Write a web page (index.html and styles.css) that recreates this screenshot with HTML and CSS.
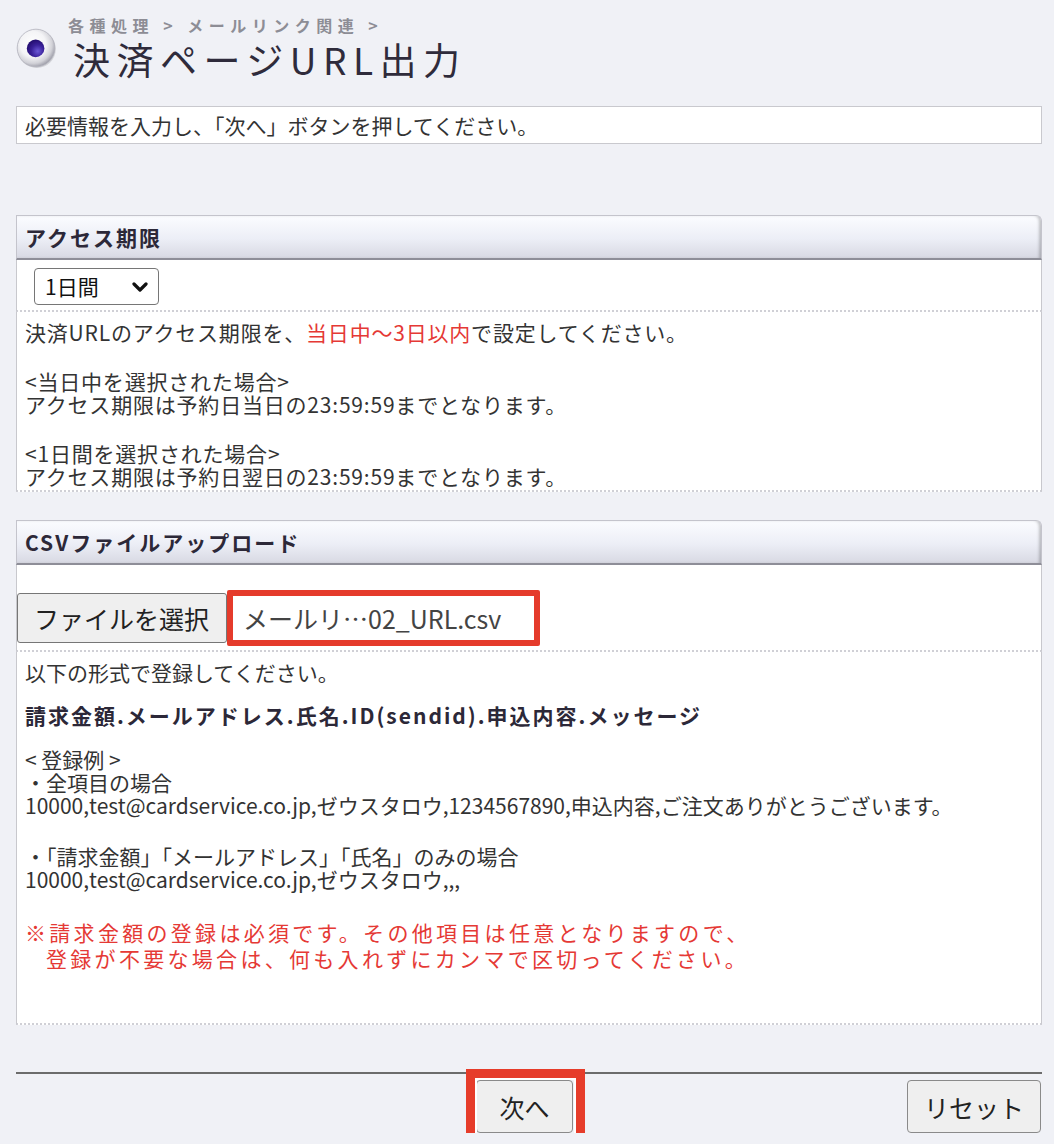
FILE: index.html
```html
<!DOCTYPE html>
<html lang="ja">
<head>
<meta charset="utf-8">
<title>決済ページURL出力</title>
<link rel="stylesheet" href="styles.css">
</head>
<body>
<div class="page">
  <header class="pagehead">
    <svg class="icon" width="40" height="40" viewBox="0 0 40 40" aria-hidden="true">
      <defs>
        <radialGradient id="ball" cx="42%" cy="40%" r="62%">
          <stop offset="0" stop-color="#ffffff"/>
          <stop offset="0.55" stop-color="#f4f4f6"/>
          <stop offset="0.82" stop-color="#d2d2d8"/>
          <stop offset="1" stop-color="#9d9da8"/>
        </radialGradient>
        <radialGradient id="dot" cx="62%" cy="66%" r="65%">
          <stop offset="0" stop-color="#6b58d6"/>
          <stop offset="0.55" stop-color="#3a2199"/>
          <stop offset="1" stop-color="#250f72"/>
        </radialGradient>
      </defs>
      <circle cx="20.8" cy="21" r="19" fill="#000" opacity="0.12"/>
      <circle cx="20" cy="20" r="18.8" fill="url(#ball)" stroke="#b3b3bc" stroke-width="0.8"/>
      <circle cx="19.6" cy="20.4" r="8.8" fill="url(#dot)"/>
    </svg>
    <div class="titles">
      <div class="crumb">各種処理 &gt; メールリンク関連 &gt;</div>
      <h1 class="title">決済ページURL出力</h1>
    </div>
  </header>

  <div class="notice">必要情報を入力し、「次へ」ボタンを押してください。</div>

  <section class="panel">
    <h2 class="panel-head">アクセス期限</h2>
    <div class="panel-row select-row">
      <div class="select">
        <span>1日間</span>
        <svg class="chev" width="16" height="10" viewBox="0 0 16 10" aria-hidden="true">
          <path d="M2 2 L8 8 L14 2" fill="none" stroke="#111" stroke-width="3.2" stroke-linecap="round" stroke-linejoin="round"/>
        </svg>
      </div>
    </div>
    <div class="panel-body access">
      <p>決済URLのアクセス期限を、<span class="red">当日中〜3日以内</span>で設定してください。</p>
      <p>&lt;当日中を選択された場合&gt;<br>アクセス期限は予約日当日の23:59:59までとなります。</p>
      <p>&lt;1日間を選択された場合&gt;<br>アクセス期限は予約日翌日の23:59:59までとなります。</p>
    </div>
  </section>

  <section class="panel">
    <h2 class="panel-head">CSVファイルアップロード</h2>
    <div class="panel-row file-row">
      <button class="filebtn" type="button">ファイルを選択</button>
      <span class="filename">メールリ…02_URL.csv</span>
    </div>
    <div class="panel-body csv">
      <p>以下の形式で登録してください。</p>
      <p class="fmt">請求金額.メールアドレス.氏名.ID(sendid).申込内容.メッセージ</p>
      <p class="ex1">&lt; 登録例 &gt;<br>・全項目の場合<br>10000,test@cardservice.co.jp,ゼウスタロウ,1234567890,申込内容,ご注文ありがとうございます。</p>
      <p class="ex2">・「請求金額」「メールアドレス」「氏名」のみの場合<br>10000,test@cardservice.co.jp,ゼウスタロウ,,,</p>
      <p class="warn">※請求金額の登録は必須です。その他項目は任意となりますので、<br><span class="indent">登録が不要な場合は、何も入れずにカンマで区切ってください。</span></p>
    </div>
  </section>

  <div class="footer">
    <span class="highlight"><button class="btn btn-next" type="button">次へ</button></span>
    <button class="btn btn-reset" type="button">リセット</button>
  </div>
</div>
</body>
</html>
```

FILE: styles.css
```css
html, body {
  margin: 0;
  padding: 0;
}

body {
  background: #f0f1f6;
  font-family: "Noto Sans CJK JP", "Noto Sans", sans-serif;
  font-size: 21px;
  line-height: 23px;
  color: #333;
}

.page {
  padding: 16px 12px 0 16px;
}

/* ---------- page heading ---------- */
.pagehead {
  display: flex;
  align-items: flex-start;
  gap: 12px;
}

.icon {
  display: block;
  flex: none;
  margin-top: 12px;
}

.crumb {
  font-size: 16px;
  font-weight: bold;
  line-height: 18px;
  letter-spacing: 5.5px;
  color: #8d8d95;
}

.title {
  margin: 5px 0 0 5px;
  font-size: 37px;
  font-weight: normal;
  line-height: 40px;
  letter-spacing: 6.5px;
  color: #2f2b3b;
}

/* ---------- notice ---------- */
.notice {
  margin-top: 27px;
  background: #fff;
  border: 1px solid #c9c9ce;
  padding: 7px 8px 6px;
}

/* ---------- panels ---------- */
.panel {
  margin-top: 71px;
}

.panel + .panel {
  margin-top: 28px;
}

.panel-head {
  margin: 0;
  padding: 10px 8px 9px;
  font-size: 21px;
  font-weight: bold;
  line-height: 23px;
  letter-spacing: 2px;
  color: #2c2838;
  background: linear-gradient(#fbfcff 0%, #eceef6 55%, #d8d9e3 100%);
  border: 1px solid #c4c4cc;
  border-bottom: 2px solid #8e8e98;
  border-top-right-radius: 6px;
  box-shadow: inset -3px 0 3px -1px rgba(0, 0, 0, 0.22);
}

.panel-row,
.panel-body {
  background: #fff;
  border-left: 1px solid #c8c8cd;
  border-right: 1px solid #c8c8cd;
  border-bottom: 2px dotted #d0d0d6;
}

.select-row {
  padding: 8px 0 5px 17px;
}

.select {
  box-sizing: border-box;
  width: 125px;
  height: 37px;
  display: flex;
  align-items: center;
  justify-content: space-between;
  padding: 0 10px;
  background: #fff;
  border: 1px solid #767676;
  border-radius: 4px;
  color: #111;
}

.chev {
  display: block;
}

.panel-body {
  padding: 9px 8px 2px;
}

.panel-body p {
  margin: 0;
}

.panel-body p + p {
  margin-top: 26px;
}

.access {
  letter-spacing: 0.8px;
}

.red {
  color: #e53935;
}

/* ---------- file upload ---------- */
.file-row {
  display: flex;
  align-items: center;
  padding: 25px 0 4px 0;
}

.filebtn {
  box-sizing: border-box;
  height: 50px;
  width: 210px;
  padding: 0 12px 0 16px;
  font-family: inherit;
  font-size: 25px;
  color: #222;
  text-align: left;
  background: #efefef;
  border: 1px solid #767676;
  border-radius: 3px;
}

.filename {
  box-sizing: border-box;
  width: 313px;
  height: 56px;
  display: flex;
  align-items: center;
  padding-left: 10px;
  font-size: 25px;
  color: #444;
  background: #fff;
  border: 6px solid #e53b2b;
  border-radius: 2px;
}

.csv {
  padding-bottom: 52px;
}

.panel-body.csv p.fmt {
  margin-top: 20px;
  font-weight: bold;
  letter-spacing: 2px;
  color: #2c2838;
}

.panel-body.csv p.ex1 {
  margin-top: 21px;
}

.panel-body.csv p.ex2 {
  margin-top: 28px;
}

.panel-body.csv p.warn {
  margin-top: 28px;
  line-height: 26px;
  letter-spacing: 3.3px;
  color: #e53935;
}

.indent {
  padding-left: 21px;
}

/* ---------- footer ---------- */
.footer {
  margin-top: 47px;
  border-top: 2px solid #6c6c6c;
  padding-top: 6px;
  display: grid;
  grid-template-columns: 1fr auto 1fr;
}

.btn {
  height: 53px;
  padding: 0;
  font-family: inherit;
  font-size: 25px;
  color: #222;
  background: #efefef;
  border: 1px solid #8a8a8a;
  border-radius: 4px;
}

.highlight {
  grid-column: 2;
  position: relative;
  display: block;
  margin-right: 9px;
}

.highlight::after {
  content: "";
  position: absolute;
  top: -11px;
  left: -10px;
  right: -12px;
  bottom: -11px;
  border: 9px solid #e63c2a;
  box-shadow: inset 0 0 0 2px #fff;
  pointer-events: none;
}

.btn-next {
  display: block;
  width: 97px;
}

.btn-reset {
  grid-column: 3;
  justify-self: end;
  width: 134px;
  margin-right: 1px;
}
```
